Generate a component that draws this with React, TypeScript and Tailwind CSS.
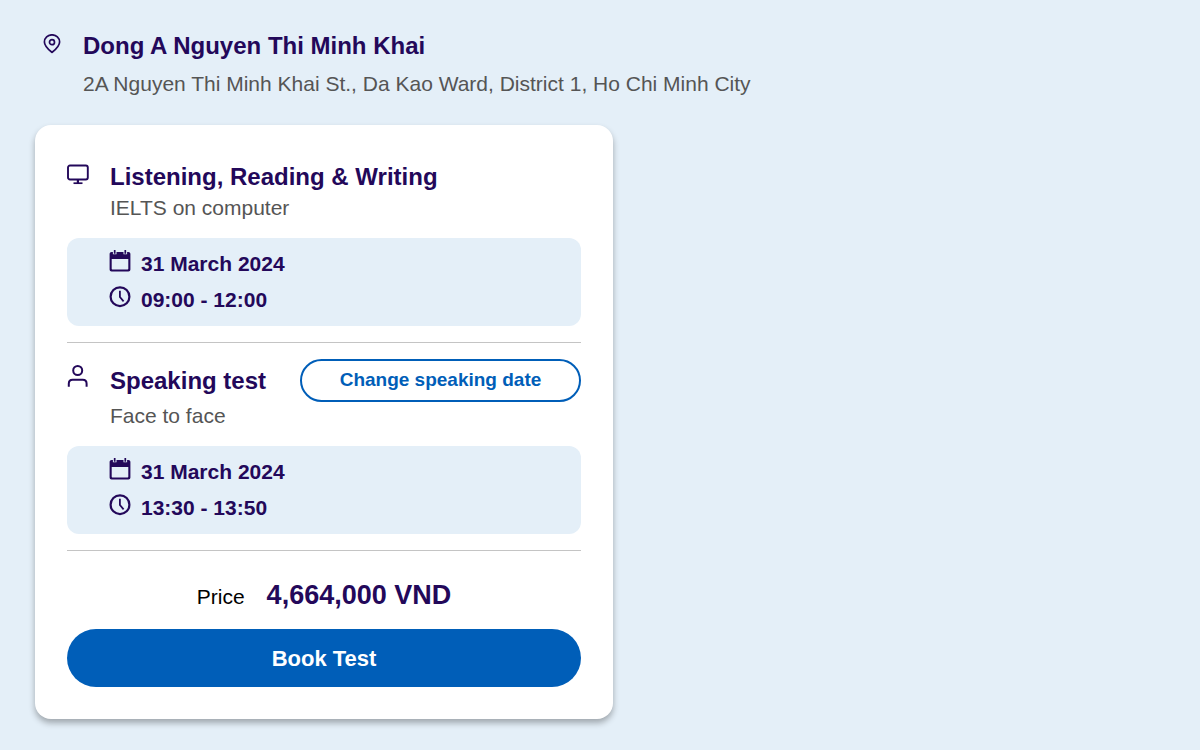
import type { ReactNode } from "react";

const sessions = [
  {
    title: "Listening, Reading & Writing",
    format: "IELTS on computer",
    icon: MonitorIcon,
    date: "31 March 2024",
    time: "09:00 - 12:00",
    canChange: false,
  },
  {
    title: "Speaking test",
    format: "Face to face",
    icon: PersonIcon,
    date: "31 March 2024",
    time: "13:30 - 13:50",
    canChange: true,
  },
];

function PinIcon() {
  return (
    <svg viewBox="0 0 18 20" className="w-[18px] h-5" fill="none" stroke="currentColor" strokeWidth="1.7" aria-hidden="true">
      <path d="M9 18.4C5.8 15.8 1.4 12.3 1.4 7.9a7.6 7.1 0 0 1 15.2 0C16.6 12.3 12.2 15.8 9 18.4Z" strokeLinejoin="round" />
      <circle cx="9" cy="8.2" r="2.5" />
    </svg>
  );
}

function MonitorIcon() {
  return (
    <svg viewBox="0 0 22 22" className="w-[22px] h-[22px]" fill="none" stroke="currentColor" aria-hidden="true">
      <rect x="1" y="1.5" width="19.8" height="14" rx="2" strokeWidth="1.9" />
      <path d="M10.9 15.5v4" strokeWidth="2.2" />
      <path d="M6.5 19.2h9" strokeWidth="1.7" />
    </svg>
  );
}

function PersonIcon() {
  return (
    <svg viewBox="0 0 22 22" className="w-[22px] h-[22px]" fill="none" stroke="currentColor" strokeWidth="2" aria-hidden="true">
      <circle cx="10.7" cy="5.5" r="4.5" />
      <path d="M1.8 21.8v-3c0-2.4 1.4-4 3.8-4h10.2c2.4 0 3.8 1.6 3.8 4v3" />
    </svg>
  );
}

function CalendarIcon() {
  return (
    <svg viewBox="0 0 22 22" className="w-[22px] h-[22px]" aria-hidden="true">
      <path
        fill="currentColor"
        fillRule="evenodd"
        d="M2.6 2h16.8c1.2 0 2 .8 2 2v15.4c0 1.200-.8 2-2 2H2.600c-1.200 0-2-.8-2-2V4c0-1.200.8-2 2-2ZM2.700 9v9.400c0 .6.4 1 1 1h14.600c.6 0 1-.4 1-1V9Z"
      />
      {/* binder rings */}
      <path d="M5.700 0v4.200M16.300 0v4.200" stroke="#e4eff8" strokeWidth="3.600" />
      <path d="M5.700 0v3.800M16.300 0v3.800" stroke="currentColor" strokeWidth="1.700" />
    </svg>
  );
}

function ClockIcon() {
  return (
    <svg viewBox="0 0 22 22" className="w-[22px] h-[22px]" fill="none" stroke="currentColor" strokeWidth="2.2" aria-hidden="true">
      <circle cx="11" cy="10.7" r="9.4" />
      <path d="M10.900 4.800v6.200l3.700 4.400" strokeWidth="1.800" />
    </svg>
  );
}

function SlotRow({ icon, children }: { icon: ReactNode; children: ReactNode }) {
  return (
    <div className="flex h-9 gap-2.5">
      <span className="mt-1 shrink-0">{icon}</span>
      <span className="text-[21px] leading-9 font-bold">{children}</span>
    </div>
  );
}

export default function App() {
  return (
    <main className="min-h-screen bg-[#e4eff8] px-[35px] py-[30px] font-['Liberation_Sans',Arial,sans-serif] text-[#23085a]">
      {/* Test centre */}
      <header className="flex gap-[22px] pl-2">
        <span className="mt-1 shrink-0">
          <PinIcon />
        </span>
        <div>
          <h1 className="text-[24px] leading-8 font-bold">Dong A Nguyen Thi Minh Khai</h1>
          <p className="mt-2 text-[21px] leading-7 text-[#555555]">
            2A Nguyen Thi Minh Khai St., Da Kao Ward, District 1, Ho Chi Minh City
          </p>
        </div>
      </header>

      <div className="mt-[27px] max-w-[578px] rounded-2xl bg-white px-8 pt-[35px] pb-8 shadow-[0_4px_6px_rgba(0,0,0,0.3)]">
        {sessions.map((session) => (
          <section key={session.title} className="mb-4 border-b border-[#c4c4c4] pb-4">
            <div className="flex gap-[21px]">
              <span className={`shrink-0 ${session.canChange ? "mt-1.5" : "mt-1"}`}>
                <session.icon />
              </span>
              <div className="flex-1">
                <div className="flex items-center justify-between">
                  <h2 className="text-[24px] leading-[34px] font-bold">{session.title}</h2>
                  {session.canChange && (
                    <button
                      type="button"
                      className="h-[43px] w-[281px] rounded-full border-2 border-[#005eb8] text-[19px] font-bold text-[#005eb8]"
                    >
                      Change speaking date
                    </button>
                  )}
                </div>
                <p className="text-[21px] leading-7 text-[#555555]">{session.format}</p>
              </div>
            </div>
            <div className="mt-4 rounded-xl bg-[#e4eff8] py-2 pl-[42px]">
              <SlotRow icon={<CalendarIcon />}>{session.date}</SlotRow>
              <SlotRow icon={<ClockIcon />}>{session.time}</SlotRow>
            </div>
          </section>
        ))}

        {/* Price */}
        <p className="mt-[26px] flex items-baseline justify-center gap-[22px] leading-9">
          <span className="text-[21px] text-black">Price</span>
          <strong className="text-[27px]">4,664,000 VND</strong>
        </p>
        <button
          type="button"
          className="mt-3.5 h-[58px] w-full rounded-full bg-[#005eb8] text-[22px] font-bold text-white"
        >
          Book Test
        </button>
      </div>
    </main>
  );
}
